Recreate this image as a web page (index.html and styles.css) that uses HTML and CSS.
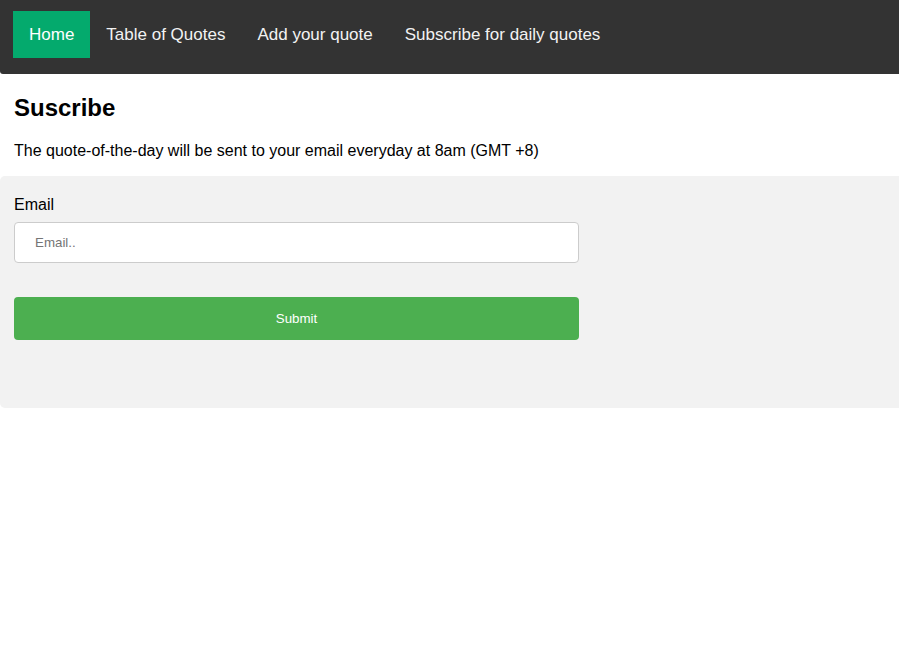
FILE: index.html
```html
<!DOCTYPE html>
<html>
<head>
<meta charset="utf-8">
<link rel="stylesheet" href="styles.css">
<title>Subscribe</title>
</head>
<body>
<nav class="topnav">
  <a class="active" href="#">Home</a>
  <a href="#">Table of Quotes</a>
  <a href="#">Add your quote</a>
  <a href="#">Subscribe for daily quotes</a>
</nav>
<main class="content">
  <h2 class="title">Suscribe</h2>
  <p class="lead">The quote-of-the-day will be sent to your email everyday at 8am (GMT +8)</p>
</main>
<section class="panel">
  <form class="form">
    <label class="label" for="email">Email</label>
    <input class="input" id="email" type="text" placeholder="Email..">
    <button class="submit" type="button">Submit</button>
  </form>
</section>
</body>
</html>
```
FILE: styles.css
```css
body {
  margin: 0;
  font-family: "Liberation Sans", Arial, sans-serif;
  color: #000;
  background: #fff;
}
.topnav {
  display: flex;
  background: #333;
  padding: 11px 13px 16px;
  border-radius: 0 0 0 3px;
}
.topnav a {
  color: #f2f2f2;
  text-decoration: none;
  font-size: 17px;
  line-height: 19px;
  padding: 14px 16px;
}
.topnav a.active {
  background: #04AA6D;
  color: #fff;
}
.content {
  padding: 0 14px;
}
.title {
  font-size: 24px;
  margin: 20px 0;
}
.lead {
  font-size: 16px;
  margin: 16px 0;
}
.panel {
  background: #f2f2f2;
  border-radius: 5px 0 0 5px;
  padding: 20px 14px 68px;
}
.form {
  width: 565px;
  display: flex;
  flex-direction: column;
}
.label {
  font-size: 16px;
  line-height: 18px;
  margin-bottom: 8px;
}
.input {
  box-sizing: border-box;
  height: 41px;
  padding: 0 20px;
  border: 1px solid #ccc;
  border-radius: 4px;
  font-family: "Liberation Sans", Arial, sans-serif;
  font-size: 13.33px;
  background: #fff;
}
.input::placeholder {
  color: #757575;
}
.submit {
  margin-top: 34px;
  height: 43px;
  border: none;
  border-radius: 4px;
  background: #4CAF50;
  color: #fff;
  font-family: "Liberation Sans", Arial, sans-serif;
  font-size: 13.33px;
}
```
